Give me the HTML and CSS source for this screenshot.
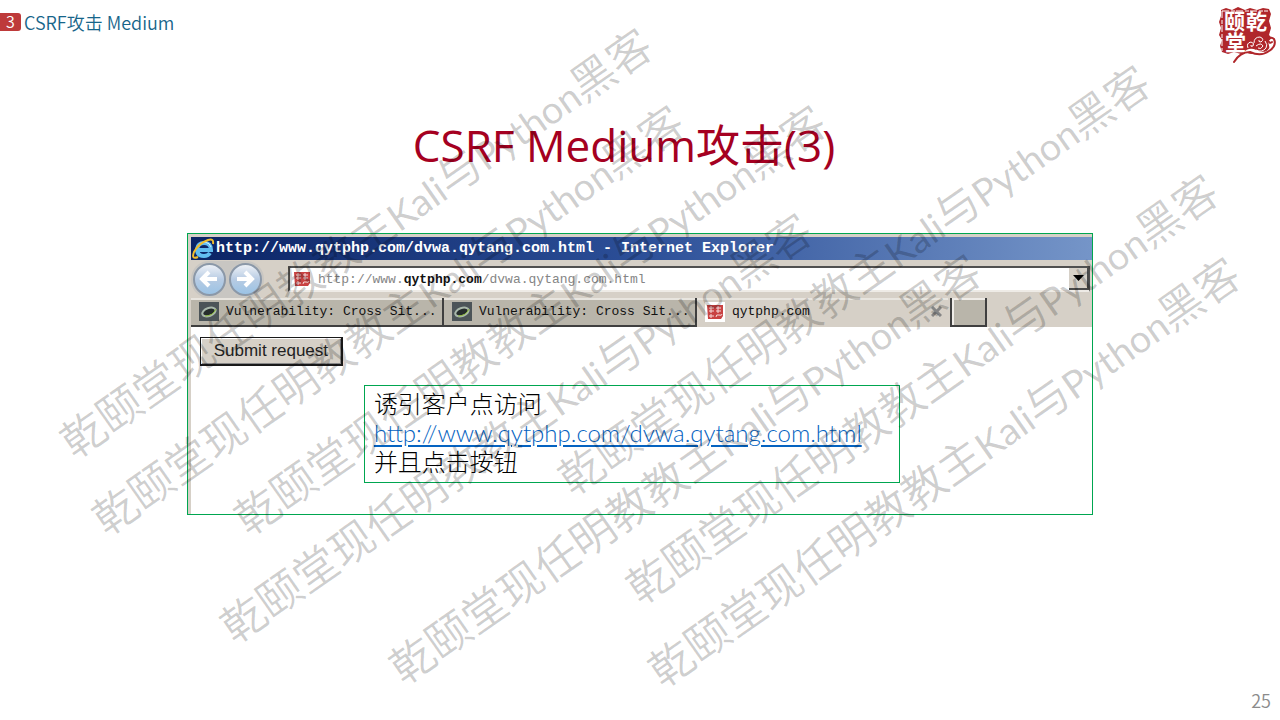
FILE: index.html
```html
<!DOCTYPE html>
<html lang="zh-CN">
<head>
<meta charset="utf-8">
<title>CSRF攻击 Medium</title>
<link rel="stylesheet" href="styles.css">
</head>
<body>
<div class="slide">
  <header class="top">
    <div class="section"><span class="badge">3</span><span>CSRF攻击 Medium</span></div>
    <svg class="logo" width="60" height="58" viewBox="0 0 60 58" role="img" aria-label="乾颐堂">
      <path fill="#b0272b" d="M3 5 8 3 14 5 20 2 27 5 32 3 39 5 45 3 51 4 53 9 51 16 53 23 51 30 54 33 50 36 52 45 46 50 38 49 31 49 23 49 16 47 10 49 4 47 2 41 4 35 1 30 3 23 1 17 3 11Z"/>
      <path fill="none" stroke="#fff" stroke-width="1" stroke-dasharray="7 2 4 1" d="M4 6H50M4 6V46"/>
      <g class="seal"><text x="6" y="24">颐</text><text x="28" y="24">乾</text><text x="7" y="45">堂</text></g>
      <path fill="none" stroke="#fff" stroke-width="4" d="M27 49Q31 44 38 47Q48 52 53 44Q59 39 55 34"/>
      <path fill="none" stroke="#b0272b" stroke-width="2" stroke-linecap="round" d="M16 57Q22 47 32 47Q43 52 51 46Q59 41 56 34Q53 31 50 35Q51 39 54 37"/>
      <path fill="none" stroke="#fff" stroke-width="1" d="M30 43Q28 38 33 37Q37 38 35 41Q32 42 33 40M36 38Q36 32 42 32Q47 34 43 37Q40 37 41 35M38 41Q43 37 45 41Q43 45 40 43M47 36Q50 40 48 43Q44 48 38 45"/>
    </svg>
  </header>

  <h1 class="title">CSRF Medium攻击(3)</h1>

  <main class="browser">
    <div class="chrome">
      <div class="titlebar">
        <svg width="25" height="22" viewBox="0 0 25 22" aria-hidden="true">
          <path fill="none" stroke="#62bdf0" stroke-width="4" d="M7 12H20Q20 5 13 5Q7 5 6 11Q6 18 13 18Q17 18 19 15"/>
          <path fill="none" stroke="#d4f1ff" stroke-width="1" d="M7 8Q9 4 14 4Q19 5 20 9"/>
          <path fill="none" stroke="#f2bd2c" stroke-width="2" d="M22 6Q23 0 17 2Q8 5 3 14Q0 22 7 19"/>
        </svg>
        <span>http://www.qytphp.com/dvwa.qytang.com.html - Internet Explorer</span>
      </div>
      <div class="addressbar">
        <div class="nav">
          <button class="round" aria-label="Back"><svg width="22" height="22" viewBox="0 0 22 22"><path d="M11 4 4 11 11 18M5 11H19"/></svg></button>
          <button class="round" aria-label="Forward"><svg width="22" height="22" viewBox="0 0 22 22"><path d="M11 4 18 11 11 18M17 11H3"/></svg></button>
        </div>
        <div class="address">
          <svg width="18" height="18" viewBox="0 0 18 18" aria-hidden="true"><path fill="#c94343" d="M1 2H17V13L15 16H2Z"/><path fill="none" stroke="#f4dada" d="M3 5H8M3 8H8M5 3V10M10 5H15M10 8H15M12 3V10M3 13H8M5 11V15M10 14Q10 11 13 12T16 11"/></svg>
          <span class="url">http://www.<b>qytphp.com</b>/dvwa.qytang.com.html</span>
          <button class="drop" aria-label="Show addresses"><svg width="11" height="6" viewBox="0 0 11 6"><path d="M0 0H11L5.500 6Z"/></svg></button>
        </div>
      </div>
      <div class="tabs">
        <button class="tab"><svg width="20" height="19" viewBox="0 0 20 19" aria-hidden="true"><path fill="#4c5458" d="M0 0H20V19H0Z"/><ellipse cx="10" cy="10" rx="7" ry="4" transform="rotate(-20 10 10)" fill="#262d2c" stroke="#a9b8ab" stroke-width="2"/><path d="M6 14Q14 14 17 7" fill="none" stroke="#8fbd3b" stroke-width="1"/></svg><span>Vulnerability: Cross Sit...</span></button>
        <button class="tab"><svg width="20" height="19" viewBox="0 0 20 19" aria-hidden="true"><path fill="#4c5458" d="M0 0H20V19H0Z"/><ellipse cx="10" cy="10" rx="7" ry="4" transform="rotate(-20 10 10)" fill="#262d2c" stroke="#a9b8ab" stroke-width="2"/><path d="M6 14Q14 14 17 7" fill="none" stroke="#8fbd3b" stroke-width="1"/></svg><span>Vulnerability: Cross Sit...</span></button>
        <button class="tab active"><svg width="20" height="20" viewBox="-1 -1 20 20" aria-hidden="true"><path fill="#fff" d="M-1-1H19V19H-1Z"/><path fill="#c94343" d="M1 2H17V13L15 16H2Z"/><path fill="none" stroke="#f4dada" d="M3 5H8M3 8H8M5 3V10M10 5H15M10 8H15M12 3V10M3 13H8M5 11V15M10 14Q10 11 13 12T16 11"/></svg><span>qytphp.com</span><svg class="close" width="11" height="11" viewBox="0 0 11 11" aria-hidden="true"><path d="M1 1 10 10M10 1 1 10"/></svg></button>
        <button class="newtab" aria-label="New tab"></button>
      </div>
    </div>
    <div class="page">
      <button class="submit">Submit request</button>
      <div class="note">
        <p>诱引客户点访问</p>
        <p><a href="#">http://www.qytphp.com/dvwa.qytang.com.html</a></p>
        <p>并且点击按钮</p>
      </div>
    </div>
  </main>

  <footer class="number">25</footer>

  <div class="marks" aria-hidden="true">
    <span class="mark m1">乾颐堂现任明教教主<i>Kali</i>与<i>Python</i>黑客</span>
    <span class="mark m2">乾颐堂现任明教教主<i>Kali</i>与<i>Python</i>黑客</span>
    <span class="mark m3">乾颐堂现任明教教主<i>Kali</i>与<i>Python</i>黑客</span>
    <span class="mark m4">乾颐堂现任明教教主<i>Kali</i>与<i>Python</i>黑客</span>
    <span class="mark m5">乾颐堂现任明教教主<i>Kali</i>与<i>Python</i>黑客</span>
    <span class="mark m6">乾颐堂现任明教教主<i>Kali</i>与<i>Python</i>黑客</span>
    <span class="mark m7">乾颐堂现任明教教主<i>Kali</i>与<i>Python</i>黑客</span>
    <span class="mark m8">乾颐堂现任明教教主<i>Kali</i>与<i>Python</i>黑客</span>
  </div>
</div>
</body>
</html>
```
FILE: styles.css
```css
* { box-sizing: border-box; }
body { margin: 0; background: #fff; color: #000; font-family: "Noto Sans CJK SC", sans-serif; }
button { margin: 0; padding: 0; border: 0; background: none; color: inherit; font: inherit; }
svg { display: block; flex: none; }
.slide { position: relative; display: flex; flex-direction: column; min-height: 100vh; overflow: hidden; }

.top { display: flex; justify-content: space-between; align-items: flex-start; height: 68px; padding: 5px 2px 0 0; }
.section { display: flex; align-items: center; gap: 3px; padding-top: 5px; color: #16658a; font-size: 18px; font-weight: 350; line-height: 24px; }
.badge { width: 21px; height: 18px; border-radius: 0 3px 3px 0; background: #be3a3a; color: #fff; font-size: 16px; line-height: 17px; text-align: center; }
.seal { fill: #fff; font-size: 21px; font-weight: 700; }

.title { margin: 47px 32px 0 0; color: #a50021; font-family: "Open Sans", "Noto Sans CJK SC", sans-serif; font-size: 44px; font-weight: 400; line-height: 60px; text-align: center; }

.browser { display: flex; flex-direction: column; width: 70.8%; min-height: 282px; margin: 58px auto 0; border: 1px solid #00a650; }
.chrome { padding: 3px 0 0 3px; background: #d6d0c7; font-family: "Liberation Mono", monospace; font-size: 13px; }
.titlebar { display: flex; align-items: center; height: 23px; background: linear-gradient(90deg, #0b2465, #2c4f98 50%, #7595c8); color: #fff; font-size: 15px; font-weight: 700; white-space: nowrap; }
.addressbar { display: flex; align-items: center; gap: 24px; height: 38px; padding-right: 2px; }
.nav { display: flex; gap: 3px; padding: 2px; border-radius: 18px; background: #c8c6c2; }
.round { display: grid; place-items: center; width: 33px; height: 33px; border: 2px solid #8b98a8; border-radius: 50%; background: linear-gradient(#edf1f7, #b7cbe3 50%, #9bc3e5); }
.round path { fill: none; stroke: #fff; stroke-width: 4; }
.address { display: flex; flex: 1; align-items: center; gap: 7px; height: 26px; padding-left: 3px; border: solid #505050; border-width: 2px 1px 0 2px; border-bottom: 2px solid #eeebe6; background: #fff; }
.url { flex: 1; color: #858585; }
.url b { color: #111; font-weight: 700; }
.drop { display: grid; place-items: center; width: 20px; height: 22px; border: solid #4b4b4b; border-width: 0 2px 2px 0; background: #d6d0c7; }
.tabs { display: flex; height: 29px; }
.tab { display: flex; align-items: center; gap: 7px; width: 253px; padding-left: 8px; border: solid #3f3f3f; border-width: 0 2px 2px 0; background: #b9b5aa; box-shadow: inset 0 2px #e8e5df; color: #111; white-space: nowrap; }
.active { border-color: #d6d0c7; background: #d6d0c7; }
.close { margin: 0 6px 0 auto; }
.close path { stroke: #858585; stroke-width: 3; }
.newtab { width: 37px; border: solid #3f3f3f; border-width: 0 2px 2px; background: #b9b5aa; box-shadow: inset 2px 2px #efece7; }
.page { flex: 1; padding: 10px 9px 31px; border-left: 3px solid #d6d0c7; }
.submit { display: block; width: 143px; height: 29px; border: solid #1a1a1a; border-width: 1px 2px 2px 1px; background: #d6d0c7; box-shadow: inset 1px 1px #fff, inset -1px -1px #888; color: #222; font: 17px "Liberation Sans", sans-serif; }
.note { width: 60.7%; margin: 19px 0 0 164px; padding: 2px 9px 7px; border: 1px solid #00a650; font-size: 24px; font-weight: 300; line-height: 29px; }
.note p { height: 29px; margin: 0; }
.note a { color: #0563c1; font-family: Lato, "Noto Sans CJK SC", sans-serif; font-weight: 300; text-decoration: underline; text-underline-offset: 3px; }
.number { margin: auto 9px 8px auto; color: #8b8b8b; font-size: 18px; font-weight: 350; line-height: 24px; }

.marks { position: absolute; inset: 0; pointer-events: none; }
.mark { position: absolute; color: rgba(0, 0, 0, .2); font-size: 44px; font-weight: 350; line-height: 60px; white-space: nowrap; transform: rotate(-35deg); transform-origin: left center; }
.mark i { font-family: Lato, sans-serif; font-size: 38px; font-style: normal; font-weight: 400; }
.m1 { left: 65px; top: 414px; }
.m2 { left: 97px; top: 491px; }
.m3 { left: 239px; top: 491px; }
.m4 { left: 225px; top: 599px; }
.m5 { left: 394px; top: 640px; }
.m6 { left: 563px; top: 451px; }
.m7 { left: 631px; top: 560px; }
.m8 { left: 653px; top: 643px; }
```
